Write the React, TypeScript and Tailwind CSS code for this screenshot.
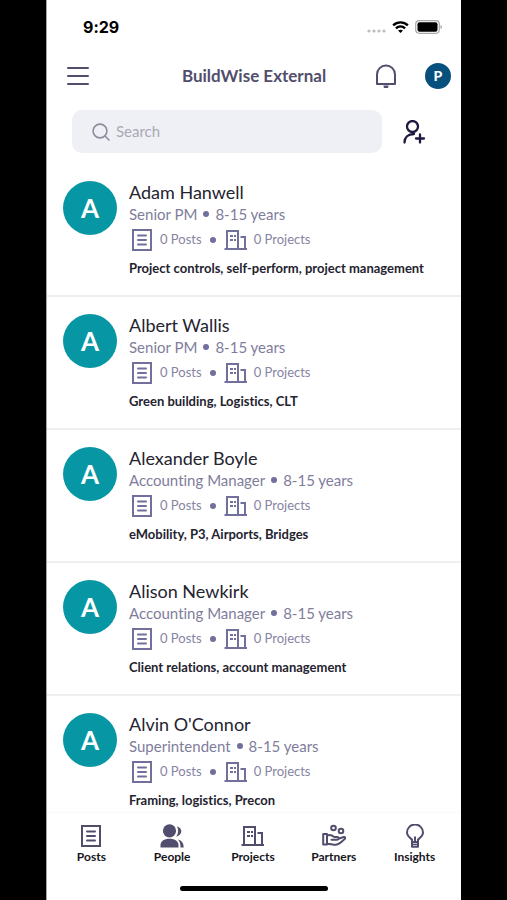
import type { ReactNode } from "react";

type Person = { name: string; role: string; years: string; skills: string };

const people: Person[] = [
  { name: "Adam Hanwell", role: "Senior PM", years: "8-15 years", skills: "Project controls, self-perform, project management" },
  { name: "Albert Wallis", role: "Senior PM", years: "8-15 years", skills: "Green building, Logistics, CLT" },
  { name: "Alexander Boyle", role: "Accounting Manager", years: "8-15 years", skills: "eMobility, P3, Airports, Bridges" },
  { name: "Alison Newkirk", role: "Accounting Manager", years: "8-15 years", skills: "Client relations, account management" },
  { name: "Alvin O'Connor", role: "Superintendent", years: "8-15 years", skills: "Framing, logistics, Precon" },
];

function Icon({ children, className = "size-6" }: { children: ReactNode; className?: string }) {
  return (
    <svg viewBox="0 0 24 24" fill="none" stroke="currentColor" strokeWidth="2" className={className} aria-hidden="true">
      {children}
    </svg>
  );
}

function PostsIcon() {
  return (
    <Icon>
      <path d="M3 2h18v20H3z" />
      <path d="M8 7.5h8M8 12h8M8 16.5h8" strokeLinecap="round" />
    </Icon>
  );
}

function ProjectsIcon() {
  return (
    <Icon>
      <path d="M.5 21h22.500M3 21V3h11v18M16.500 9H21v12" />
      <path d="M6 8h3M10 8h2M6 12h3M10 12h2" />
    </Icon>
  );
}

function PeopleIcon() {
  return (
    <Icon>
      <g fill="currentColor" stroke="none">
        <circle cx="9.5" cy="6.8" r="6.6" />
        <path d="M.5 23.5v-2.2c0-4 3.6-6.5 9-6.5s9 2.5 9 6.500v2.200z" />
        <path d="M17 2.500c5.800 1.500 6 8.500-.8 10.200 2.200-3 2.700-7 .8-10.200z" />
        <path d="M18 15.500c3.800 1 5.700 3.800 5.700 8h-3.200c0-3.500-.6-5.700-2.500-8z" />
      </g>
    </Icon>
  );
}

function PartnersIcon() {
  return (
    <Icon>
      <g strokeWidth="2" strokeLinejoin="round" strokeLinecap="round">
        <circle cx="11.500" cy="4" r="2.300" />
        <circle cx="19" cy="7" r="2.300" />
        <path d="M1.200 10h3.800v10.500H1.200z" />
        <path d="M5 11.500c3-1.500 5.500 0 7.300 1.500h2.900c2 0 2 2.700 0 2.700H9.500M16.500 14.700l5.200-1.700c1.800-.3 2 1.400.8 2.200-2.700 2.200-5.500 5.600-9 5.600-3 0-5.300-1.100-8.500-1.100" />
      </g>
    </Icon>
  );
}

function InsightsIcon() {
  return (
    <Icon>
      <g strokeWidth="2" strokeLinejoin="round">
        <path d="M9 18v-2.500c-2.500-2-5-3.500-5-7a8 8 0 0 1 16 0c0 3.500-2.500 5-5 7V18" />
        <path d="M9 18h6v4.700H9zM12 18v-5.500" />
        <path d="M9 20.400h6" strokeWidth="1.500" />
      </g>
    </Icon>
  );
}

const tabs = [
  { label: "Posts", icon: <PostsIcon /> },
  { label: "People", icon: <PeopleIcon /> },
  { label: "Projects", icon: <ProjectsIcon /> },
  { label: "Partners", icon: <PartnersIcon /> },
  { label: "Insights", icon: <InsightsIcon /> },
];

function Dot() {
  return <span className="size-1.5 shrink-0 rounded-full bg-[#716f9b]" />;
}

function StatusBar() {
  return (
    <div className="flex h-[54px] shrink-0 items-center justify-between pr-[18px] pl-9">
      <span className="font-['Inter',sans-serif] text-[16px] font-bold">9:29</span>
      <div className="flex items-center gap-1.5">
        <svg viewBox="0 0 20 14" className="h-3.5 w-5 fill-[#bdbdbd]" aria-hidden="true">
          <circle cx="3" cy="11" r="1.600" />
          <circle cx="8" cy="11" r="1.600" />
          <circle cx="13" cy="11" r="1.600" />
          <circle cx="18" cy="11" r="1.600" />
        </svg>
        <svg viewBox="0 0 18 13" className="h-3 w-[17px]" fill="none" stroke="black" strokeWidth="2.500" aria-hidden="true">
          <path d="M1 4.700c4.700-4.300 11.300-4.300 16 0M4 8c3-2.700 7-2.700 10 0" />
          <path d="M6.300 10.400c1.700-1.400 3.700-1.400 5.400 0L9 13z" fill="black" stroke="none" />
        </svg>
        <svg viewBox="0 0 28 14" className="h-3.5 w-7" aria-hidden="true">
          <rect x=".7" y=".7" width="23.600" height="12.600" rx="3.500" fill="none" stroke="#a9a9a9" strokeWidth="1.200" />
          <rect x="2.500" y="2.200" width="20" height="9.600" rx="2" />
          <path d="M25.500 5c2 .5 2 3.500 0 4z" fill="#a9a9a9" />
        </svg>
      </div>
    </div>
  );
}

function Header() {
  return (
    <header className="grid h-11 shrink-0 grid-cols-[1fr_auto_1fr] items-center px-2.5 text-[#504e6c]">
      <button type="button" aria-label="Menu" className="justify-self-start pl-2.5">
        <svg viewBox="0 0 22 20" className="h-5 w-[22px]" stroke="currentColor" strokeWidth="2" strokeLinecap="round" aria-hidden="true">
          <path d="M1 2h20M1 10h20M1 18h20" />
        </svg>
      </button>
      <h1 className="text-[17px] font-bold">BuildWise External</h1>
      <div className="flex items-center justify-end gap-[27px]">
        <button type="button" aria-label="Notifications">
          <Icon>
            <path d="M3 20V10.500a9 9 0 0 1 18 0V20z" strokeLinejoin="round" />
            <path d="M9.500 21.500h5v.5a2.500 2.500 0 0 1-5 0z" fill="currentColor" stroke="none" />
          </Icon>
        </button>
        <button type="button" aria-label="Profile" className="size-[26px] rounded-full bg-[#07507d] text-sm font-black text-white">
          P
        </button>
      </div>
    </header>
  );
}

function SearchRow() {
  return (
    <div className="flex shrink-0 items-center gap-5 pt-3 pr-[35px] pb-[11px] pl-[25px]">
      <label className="flex h-[43px] min-w-0 flex-1 items-center gap-1.5 rounded-[10px] bg-[#eff0f6] pl-5">
        <svg viewBox="0 0 18 18" className="size-[18px] shrink-0" fill="none" stroke="#8d8d9c" strokeWidth="1.600" strokeLinecap="round" aria-hidden="true">
          <circle cx="8" cy="8" r="6.900" />
          <path d="m13 13 4 4" />
        </svg>
        <input
          type="text"
          aria-label="Search"
          placeholder="Search"
          className="min-w-0 flex-1 bg-transparent text-[15px] outline-none placeholder:text-[#a9a9b4]"
        />
      </label>
      <button type="button" aria-label="Add person" className="text-[#1c1940]">
        <Icon>
          <g strokeWidth="2.300" strokeLinecap="round">
            <circle cx="10.500" cy="6.500" r="5.500" />
            <path d="M2.500 22.500c0-5 3.500-8.500 9.500-8.500M18 14.500v8M14 18.500h8" />
          </g>
        </Icon>
      </button>
    </div>
  );
}

function PersonRow({ person }: { person: Person }) {
  return (
    <li className="flex h-[133px] gap-3 border-b-2 border-[#efeff1] px-4 pt-[17px]">
      <div className="flex size-[54px] shrink-0 items-center justify-center rounded-full bg-[#0797a4] text-[26px] font-bold text-white">
        {person.name[0]}
      </div>
      <div className="min-w-0 whitespace-nowrap">
        <h2 className="text-[18px] leading-[22px] text-[#24232f]">{person.name}</h2>
        <p className="flex items-center gap-1.5 text-[15px] leading-[22px] text-[#7f7d9c]">
          {person.role} <Dot /> {person.years}
        </p>
        <div className="flex h-[30px] items-center gap-2 pl-px text-[13px] text-[#8684a2]">
          <span className="flex items-center gap-1.5">
            <span className="text-[#716f9b]">
              <PostsIcon />
            </span>
            0 Posts
          </span>
          <Dot />
          <span className="flex items-center gap-1.5">
            <span className="text-[#716f9b]">
              <ProjectsIcon />
            </span>
            0 Projects
          </span>
        </div>
        <p className="mt-1 text-[13px] leading-[18px] font-bold text-[#24232f]">{person.skills}</p>
      </div>
    </li>
  );
}

export default function App() {
  return (
    <div className="h-screen bg-black px-[46px] font-['Lato',sans-serif] [font-variant-ligatures:none]">
      <div className="flex h-full flex-col overflow-hidden border-l border-[#a5a5a5] bg-white">
        <StatusBar />
        <Header />
        <SearchRow />
        <ul className="min-h-0 flex-1 overflow-hidden">
          {people.map((person) => (
            <PersonRow key={person.name} person={person} />
          ))}
        </ul>
        <nav className="shrink-0 border-t border-[#fafafa] pt-[11px]">
          <div className="grid grid-cols-5 pr-1.5 pl-1">
            {tabs.map((tab) => (
              <a key={tab.label} href="#" className="flex flex-col items-center gap-px text-[#504e6c]">
                {tab.icon}
                <span className="text-[12px] leading-4 font-bold text-[#16151c]">{tab.label}</span>
              </a>
            ))}
          </div>
          <div className="mx-auto mt-[21px] mb-[9px] h-[5px] w-[148px] rounded-full bg-black" />
        </nav>
      </div>
    </div>
  );
}
